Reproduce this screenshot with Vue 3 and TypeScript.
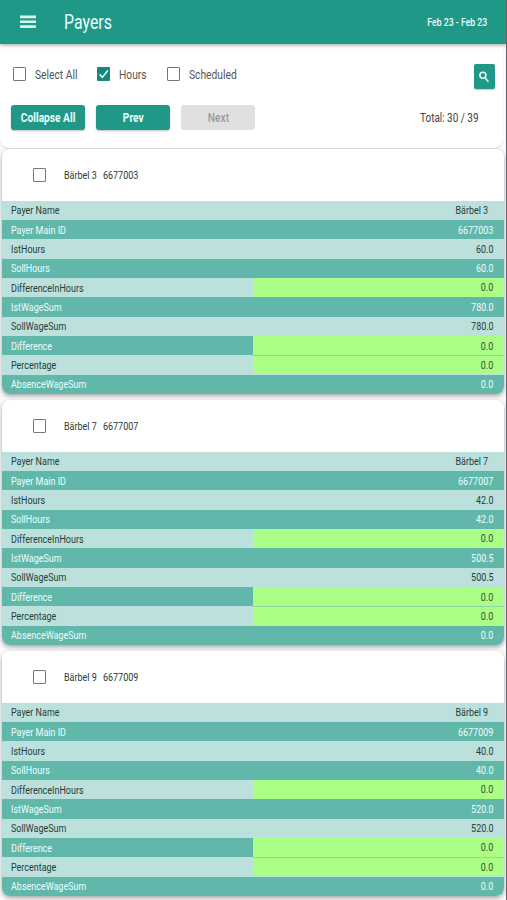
<script setup lang="ts">
interface Row {
  label: string
  value: string
  good?: boolean
}
interface Payer {
  name: string
  id: string
  rows: Row[]
}

function makePayer(name: string, id: string, hours: string, wage: string): Payer {
  return {
    name,
    id,
    rows: [
      { label: 'Payer Name', value: name },
      { label: 'Payer Main ID', value: id },
      { label: 'IstHours', value: hours },
      { label: 'SollHours', value: hours },
      { label: 'DifferenceInHours', value: '0.0', good: true },
      { label: 'IstWageSum', value: wage },
      { label: 'SollWageSum', value: wage },
      { label: 'Difference', value: '0.0', good: true },
      { label: 'Percentage', value: '0.0', good: true },
      { label: 'AbsenceWageSum', value: '0.0' },
    ],
  }
}

const payers: Payer[] = [
  makePayer('Bärbel 3', '6677003', '60.0', '780.0'),
  makePayer('Bärbel 7', '6677007', '42.0', '500.5'),
  makePayer('Bärbel 9', '6677009', '40.0', '520.0'),
]
const filters = [
  { label: 'Select All', checked: false },
  { label: 'Hours', checked: true },
  { label: 'Scheduled', checked: false },
]
</script>

<template>
  <div class="page">
    <header class="bar">
      <svg class="menu" viewBox="0 0 16 14"><path d="M0 0.5h16v2.7H0zM0 5.4h16v2.7H0zM0 10.3h16V13H0z" /></svg>
      <h1 class="t">Payers</h1>
      <span class="t range">Feb 23 - Feb 23</span>
    </header>

    <section class="panel">
      <div class="filters">
        <label v-for="f in filters" :key="f.label" class="filter">
          <span class="box" :class="{ on: f.checked }">
            <svg v-if="f.checked" viewBox="0 0 12 14"><path d="M2 7.3 4.8 10.4 10.4 3.6" /></svg>
          </span>
          <span class="t">{{ f.label }}</span>
        </label>
        <button class="search" aria-label="Search">
          <svg viewBox="0 0 10 12"><circle cx="3.9" cy="4.3" r="3" /><path d="M6 6.8 9.4 10.8" /></svg>
        </button>
      </div>
      <div class="actions">
        <button class="btn wide"><span class="t">Collapse All</span></button>
        <button class="btn"><span class="t">Prev</span></button>
        <button class="btn off" disabled><span class="t">Next</span></button>
        <span class="t total">Total: 30 / 39</span>
      </div>
    </section>

    <article v-for="p in payers" :key="p.id" class="card">
      <div class="head">
        <span class="box"></span>
        <span class="t name">{{ p.name }}</span>
        <span class="t">{{ p.id }}</span>
      </div>
      <div v-for="(r, i) in p.rows" :key="r.label" class="row" :class="{ good: r.good, inset: i === 0 }">
        <span class="cell"><span class="t">{{ r.label }}</span></span>
        <span class="cell value"><span class="t">{{ r.value }}</span></span>
      </div>
    </article>
  </div>
</template>

<style>
body {
  margin: 0;
  background: #fafafa;
}
</style>

<style scoped>
.page {
  box-sizing: border-box;
  width: 507px;
  height: 900px;
  overflow: hidden;
  background: #fafafa;
  border-right: 1px solid #60646a;
  font-family: Roboto, "Liberation Sans", sans-serif;
  font-size: 11px;
  color: #263c39;
}
/* Condensed text */
.t {
  display: inline-block;
  white-space: nowrap;
  transform: scaleX(0.815);
  transform-origin: left center;
}
.bar {
  position: relative;
  display: flex;
  align-items: center;
  box-sizing: border-box;
  height: 44px;
  padding: 0 19px 0 20px;
  background: #209888;
  color: #e9fffb;
  box-shadow: 0 1px 4px rgba(0, 0, 0, 0.4);
}
.menu {
  width: 16px;
  height: 14px;
  margin-right: 27.5px;
  fill: #d4f5ef;
}
h1 {
  margin: 0;
  font-size: 19.5px;
  font-weight: 400;
}
.range {
  margin-left: auto;
  font-size: 10.5px;
  font-weight: 500;
  transform: scaleX(0.83);
  transform-origin: right center;
}
.panel {
  box-sizing: border-box;
  height: 104px;
  width: 503px;
  padding-top: 15px;
  background: #fff;
  border-radius: 0 0 9px 9px;
  box-shadow: 0 1px 1px rgba(0, 0, 0, 0.12);
}
.filters {
  display: grid;
  grid-template-columns: 84px 70px 300px 21px;
  height: 28px;
  padding-left: 13px;
  align-items: center;
}
.filter {
  display: flex;
  align-items: center;
  gap: 8.5px;
  height: 24px;
  font-size: 12.5px;
  color: #555;
}
.filter .t {
  transform: scaleX(0.82);
}
.box {
  box-sizing: border-box;
  flex: none;
  width: 13px;
  height: 14px;
  border: 1.5px solid #777;
  border-radius: 1px;
}
.box.on {
  border: 0;
  background: #168779;
}
.box svg {
  display: block;
  width: 13px;
  height: 14px;
  fill: none;
  stroke: #e9fffb;
  stroke-width: 1.6;
}
.search {
  display: grid;
  place-items: center;
  width: 21px;
  height: 25px;
  margin-top: 5px;
  margin-left: 6.5px;
  padding: 0;
  border: 0;
  border-radius: 2px;
  background: #209888;
  box-shadow: 0 1px 1px rgba(0, 0, 0, 0.2);
}
.search svg {
  width: 10px;
  height: 12px;
  fill: none;
  stroke: #e9fffb;
  stroke-width: 1.5;
}
.actions {
  display: flex;
  align-items: center;
  gap: 11.3px;
  margin-top: 18.4px;
  padding: 0 26px 0 10.5px;
}
.btn {
  display: flex;
  flex: none;
  align-items: center;
  justify-content: center;
  width: 73.5px;
  height: 25px;
  padding: 0;
  border: 0;
  border-radius: 3px;
  background: #209888;
  color: #e9fffb;
  font: 700 12px Roboto, sans-serif;
  box-shadow: 0 1px 2px rgba(0, 0, 0, 0.25);
}
.btn.wide {
  width: 74.7px;
}
.btn .t {
  transform: scaleX(0.85);
  transform-origin: center;
}
.btn.off {
  background: #e0e0e0;
  color: #999;
  font-weight: 500;
  box-shadow: none;
}
.total {
  margin-left: auto;
  margin-right: -1.5px;
  font-size: 12px;
  color: #444;
  transform: scaleX(0.83);
  transform-origin: right center;
}
.card {
  width: 501.5px;
  height: 245.2px;
  margin: 0 0 5.8px 2px;
  overflow: hidden;
  background: #fff;
  border-radius: 8px;
  box-shadow: 0 2px 4px rgba(0, 0, 0, 0.34);
}
.panel + .card {
  margin-top: 1px;
}
.head {
  display: flex;
  align-items: center;
  box-sizing: border-box;
  height: 51.7px;
  padding: 1px 0 0 31px;
}
.head .name {
  width: 39px;
  margin-left: 17.5px;
}
.row {
  display: grid;
  grid-template-columns: 251px 1fr;
  height: 19.35px;
  background: #bce1dc;
}
.row:nth-child(odd) {
  background: #62b7ab;
  color: #e9fffb;
}
.cell {
  display: flex;
  align-items: center;
  padding: 1px 9px 0;
}
.value {
  justify-content: flex-end;
  padding-right: 10px;
}
.value .t {
  transform-origin: right center;
}
.inset .value {
  padding-right: 15px;
}
.good .value {
  margin-bottom: 0.5px;
  background: #abff87;
  color: #31512c;
}
.good + .good .value {
  border-top: 1px solid #8fd6a0;
  padding-top: 0;
}
</style>
